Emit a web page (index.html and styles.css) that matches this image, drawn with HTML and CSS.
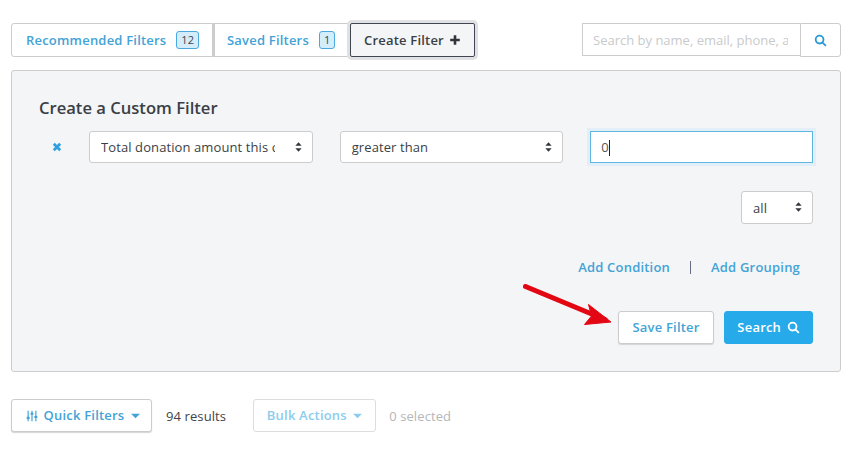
FILE: index.html
```html
<!DOCTYPE html>
<html lang="en">
<head>
  <meta charset="UTF-8" />
  <title>Filters</title>
  <link rel="stylesheet" href="styles.css">
</head>
<body>
  <div class="top-bar">
    <div class="tabs">
      <a class="tab">Recommended Filters <span class="count">12</span></a>
      <a class="tab">Saved Filters <span class="count">1</span></a>
      <a class="tab tab-active">Create Filter
        <svg class="plus-icon" viewBox="0 0 12 12"><path d="M6 1.2v9.6M1.2 6h9.6" /></svg>
      </a>
    </div>
    <div class="search-box">
      <input type="text" class="search-input" placeholder="Search by name, email, phone, address" />
      <button class="search-button">
        <svg class="search-icon" viewBox="0 0 14 14"><circle cx="6" cy="6" r="4.2" /><path d="M9.2 9.2l3.6 3.6" /></svg>
      </button>
    </div>
  </div>

  <div class="panel">
    <h2>Create a Custom Filter</h2>
    <div class="condition">
      <svg class="remove-icon" viewBox="0 0 10 10"><path d="M1.8 1.8l6.4 6.4M8.2 1.8l-6.4 6.4" /></svg>
      <div class="select-wrap field-wide">
        <select><option>Total donation amount this calendar year</option></select>
        <svg class="sort-icon" viewBox="0 0 8 11"><path d="M4 0l3.6 4H.4zM4 11L.4 7h7.2z" /></svg>
      </div>
      <div class="select-wrap field-wide">
        <select><option>greater than</option></select>
        <svg class="sort-icon" viewBox="0 0 8 11"><path d="M4 0l3.6 4H.4zM4 11L.4 7h7.2z" /></svg>
      </div>
      <div class="value-input">0<span class="caret"></span></div>
    </div>

    <div class="match-row">
      <div class="select-wrap field-small">
        <select><option>all</option></select>
        <svg class="sort-icon" viewBox="0 0 8 11"><path d="M4 0l3.6 4H.4zM4 11L.4 7h7.2z" /></svg>
      </div>
    </div>

    <div class="link-row">
      <a class="link">Add Condition</a>
      <span class="divider"></span>
      <a class="link">Add Grouping</a>
    </div>

    <div class="action-row">
      <button class="btn btn-white">Save Filter</button>
      <button class="btn btn-blue">Search
        <svg class="search-icon" viewBox="0 0 14 14"><circle cx="6" cy="6" r="4.2" /><path d="M9.2 9.2l3.6 3.6" /></svg>
      </button>
    </div>

    <svg class="arrow" viewBox="0 0 92 44">
      <path d="M2.5 2.5L82 35.5" class="arrow-line" />
      <path d="M88 38L61.5 40.5 68.5 32 65.5 20.5z" class="arrow-head" />
    </svg>
  </div>

  <div class="bottom-bar">
    <button class="btn btn-white btn-quick">
      <svg class="sliders-icon" viewBox="0 0 14 14">
        <path d="M2.5 1v12M7 1v12M11.5 1v12" class="slider-line" />
        <path d="M.8 8h3.4v2.4H.8zM5.3 3.2h3.4v2.4H5.3zM9.8 7h3.4v2.4H9.8z" class="slider-knob" />
      </svg>
      Quick Filters
      <svg class="drop-icon" viewBox="0 0 10 6"><path d="M0 .5h10L5 5.5z" /></svg>
    </button>
    <span class="results">94 results</span>
    <button class="btn btn-disabled">Bulk Actions
      <svg class="drop-icon" viewBox="0 0 10 6"><path d="M0 .5h10L5 5.5z" /></svg>
    </button>
    <span class="selected">0 selected</span>
  </div>
</body>
</html>
```

FILE: styles.css
```css
body {
  margin: 0;
  padding: 23px 10px 0 11px;
  height: 427px;
  overflow: hidden;
  background: white;
  color: #3a3f45;
  font-family: "Open Sans", Arial, sans-serif;
  font-size: 13px;
}

button {
  font-family: inherit;
  font-size: 13px;
  cursor: pointer;
}

.top-bar {
  display: flex;
  justify-content: space-between;
  height: 34px;
}

/* tabs */
.tabs {
  display: flex;
}

.tab {
  display: flex;
  align-items: center;
  padding: 0 13px 0 14px;
  border: 1px solid #ccc;
  color: #43a3d6;
  font-weight: 600;
  letter-spacing: 0.2px;
  background: white;
  white-space: nowrap;
}

.tab:first-child {
  width: 202px;
  box-sizing: border-box;
  border-radius: 3px 0 0 3px;
}

.tab:nth-child(2) {
  width: 137px;
  box-sizing: border-box;
  border-left: 2px solid #ccc;
  padding-left: 12px;
}

.tab-active {
  width: 125px;
  box-sizing: border-box;
  border: 1px solid #3f4650;
  border-radius: 2px;
  background: #f4f5f7;
  color: #3a3f45;
  box-shadow: 0 0 0 3px #dfe1e4;
  position: relative;
  padding-left: 13px;
}

.count {
  margin-left: 10px;
  padding: 0 4px;
  height: 16px;
  line-height: 16px;
  border: 1px solid #4aa9dc;
  border-radius: 3px;
  background: #d3edfb;
  color: #444;
  font-size: 11px;
  font-weight: 400;
  letter-spacing: 0;
}

.plus-icon {
  width: 12px;
  height: 12px;
  margin-left: 5px;
  fill: none;
  stroke: #30353b;
  stroke-width: 2.6;
}

/* search box */
.search-box {
  display: flex;
}

.search-input {
  width: 218px;
  height: 33px;
  box-sizing: border-box;
  padding: 0 12px 0 10px;
  border: 1px solid #ccc;
  border-right: 0;
  font-family: inherit;
  font-size: 13px;
  outline: none;
}

.search-input::placeholder {
  color: #c8cacc;
}

.search-button {
  width: 41px;
  height: 34px;
  border: 1px solid #ccc;
  border-radius: 0 3px 3px 0;
  background: white;
  padding: 0;
}

.search-icon {
  width: 13px;
  height: 13px;
  fill: none;
  stroke: #2b9ad6;
  stroke-width: 2;
  vertical-align: -2px;
}

/* panel */
.panel {
  position: relative;
  height: 302px;
  box-sizing: border-box;
  margin-top: 13px;
  padding: 26px 27px 0;
  border: 1px solid #ccc;
  border-radius: 3px;
  background: #f4f5f7;
}

.panel h2 {
  margin: 0;
  font-size: 16.6px;
  line-height: 22px;
  font-weight: 600;
  color: #3a3f45;
}

.condition {
  display: flex;
  align-items: center;
  margin-top: 12px;
}

.remove-icon {
  width: 10px;
  height: 10px;
  margin: 0 27px 0 13px;
  fill: none;
  stroke: #2f9fe0;
  stroke-width: 2.8;
}

.select-wrap {
  position: relative;
  height: 32px;
}

.field-wide {
  width: 224px;
  margin-right: 27px;
}

.field-small {
  width: 72px;
  height: 33px;
}

.select-wrap select {
  width: 100%;
  height: 100%;
  box-sizing: border-box;
  padding: 0 37px 0 11px;
  border: 1px solid #ccc;
  border-radius: 3px;
  background: white;
  color: #3a3f45;
  font-family: inherit;
  font-size: 13px;
  letter-spacing: 0.1px;
  appearance: none;
}

.sort-icon {
  position: absolute;
  top: 11px;
  right: 11px;
  width: 7px;
  height: 10px;
  fill: #33383e;
}

.value-input {
  display: flex;
  align-items: center;
  width: 223px;
  height: 32px;
  box-sizing: border-box;
  padding-left: 10px;
  border: 1px solid #5fb6e0;
  background: white;
  box-shadow: 0 0 0 3px #e2eff8;
  color: #555;
}

.caret {
  width: 1px;
  height: 16px;
  margin-top: 2px;
  background: #222;
}

.match-row {
  display: flex;
  justify-content: flex-end;
  margin-top: 28px;
}

.link-row {
  display: flex;
  justify-content: flex-end;
  align-items: center;
  height: 20px;
  margin-top: 33px;
  padding-right: 13px;
}

.link {
  color: #43a3d6;
  font-weight: 600;
  letter-spacing: 0.2px;
}

.divider {
  width: 1px;
  height: 13px;
  margin: 0 20px;
  background: #666c84;
}

.action-row {
  display: flex;
  justify-content: flex-end;
  gap: 10px;
  margin-top: 34px;
}

.btn {
  height: 33px;
  border-radius: 3px;
  font-weight: 600;
  padding: 0 0 2px;
  letter-spacing: 0.2px;
}

.btn-white {
  width: 96px;
  border: 1px solid #ccc;
  background: white;
  color: #43a3d6;
  box-shadow: 0 1px 1px #d5d5d5;
}

.btn-blue {
  width: 89px;
  border: 1px solid #27aae9;
  background: #27aae9;
  color: white;
}

.btn-blue .search-icon {
  stroke: white;
  margin-left: 2px;
}

.arrow {
  position: absolute;
  left: 511px;
  top: 213px;
  width: 92px;
  height: 44px;
}

.arrow-line {
  fill: none;
  stroke: #e30613;
  stroke-width: 5;
  stroke-linecap: round;
}

.arrow-head {
  fill: #e30613;
  stroke: #e30613;
  stroke-width: 1;
  stroke-linejoin: round;
}

/* bottom row */
.bottom-bar {
  display: flex;
  align-items: center;
  margin-top: 27px;
}

.btn-quick {
  width: 141px;
  padding-left: 3px;
}

.sliders-icon {
  width: 12px;
  height: 12px;
  vertical-align: -2px;
  margin-right: 2px;
}

.slider-line {
  fill: none;
  stroke: #43a3d6;
  stroke-width: 1.4;
}

.slider-knob {
  fill: #43a3d6;
}

.drop-icon {
  width: 9px;
  height: 6px;
  margin-left: 3px;
  fill: #43a3d6;
  vertical-align: 1px;
}

.results {
  margin: 0 27px 0 14px;
  color: #3f444a;
  letter-spacing: 0.1px;
}

.btn-disabled {
  width: 123px;
  border: 1px solid #ddd;
  background: white;
  color: #8ccdee;
}

.btn-disabled .drop-icon {
  fill: #8ccdee;
}

.selected {
  margin-left: 13px;
  color: #b4b6b8;
  letter-spacing: 0.1px;
}
```
